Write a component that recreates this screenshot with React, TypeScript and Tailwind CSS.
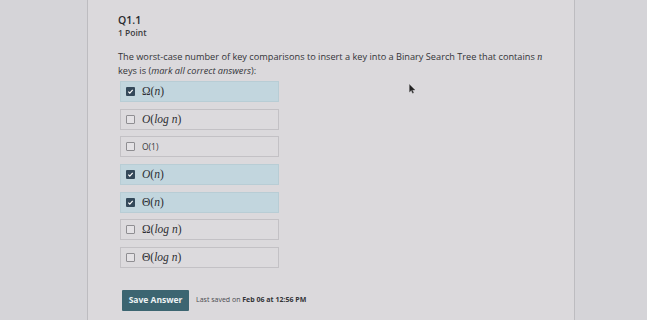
import React from "react";

const options = [
  { checked: true, label: <>Ω(<i>n</i>)</>, math: true },
  { checked: false, label: <><i>O</i>(<i>log n</i>)</>, math: true },
  { checked: false, label: <>O(1)</>, math: false },
  { checked: true, label: <><i>O</i>(<i>n</i>)</>, math: true },
  { checked: true, label: <>Θ(<i>n</i>)</>, math: true },
  { checked: false, label: <>Ω(<i>log n</i>)</>, math: true },
  { checked: false, label: <>Θ(<i>log n</i>)</>, math: true },
];

function Box({ checked }: { checked: boolean }) {
  if (checked) {
    return (
      <span className="flex h-[9px] w-[9px] items-center justify-center rounded-[1px] bg-[#34495a]">
        <svg width="7" height="7" viewBox="0 0 8 8">
          <path d="M1.5 4.2 L3.2 5.8 L6.5 2.2" stroke="#ffffff" strokeWidth="1.4" fill="none" />
        </svg>
      </span>
    );
  }
  return <span className="h-[9px] w-[9px] rounded-[1px] border border-[#8f8e92] bg-[#e4e2e5]" />;
}

export default function App() {
  return (
    <div
      className="relative flex h-[320px] w-[647px] overflow-hidden bg-[#d5d4d8] text-[#2f3033]"
      style={{ fontFamily: '"Open Sans", "Liberation Sans", sans-serif' }}
    >
      <div className="w-[87px] shrink-0" />
      <div className="w-[488px] shrink-0 border-l border-r border-[#bdbcc0] bg-[#dbd9dc] pl-[30px] pt-[13px]">
        <div className="text-[10.5px] font-semibold leading-[14px] text-[#2a2b2e]">Q1.1</div>
        <div className="text-[8.5px] font-semibold leading-[12px] text-[#3a3b3e]">1 Point</div>
        <p className="mt-[11px] w-[445px] text-[9.2px] leading-[14px] text-[#333438]">
          The worst-case number of key comparisons to insert a key into a Binary Search Tree that contains{" "}
          <i className="text-[10px]" style={{ fontFamily: '"Liberation Serif", serif' }}>n</i>
          <br />
          keys is (<i>mark all correct answers</i>):
        </p>
        <div className="mt-[3px] flex w-[161px] flex-col gap-[6.7px] pl-[2px]">
          {options.map((o, i) => (
            <div
              key={i}
              className={
                "flex h-[21px] items-center gap-[7px] border pl-[5px] " +
                (o.checked ? "border-[#b8cdd5] bg-[#c2d6de]" : "border-[#c3c1c5] bg-[#dcdadd]")
              }
            >
              <Box checked={o.checked} />
              <span
                className={o.math ? "text-[11.5px] text-[#2d2e32]" : "text-[8.5px] text-[#3a3b3e]"}
                style={{ fontFamily: o.math ? '"Liberation Serif", serif' : '"Open Sans", sans-serif' }}
              >
                {o.label}
              </span>
            </div>
          ))}
        </div>
        <div className="mt-[22px] flex items-center gap-[7px] pl-[4px]">
          <button className="h-[21px] w-[67px] rounded-[1px] bg-[#3c6571] text-[8.5px] font-bold text-[#eef3f4]">
            Save Answer
          </button>
          <span className="text-[7px] text-[#4a4b4f]">
            Last saved on <b className="text-[#333438]">Feb 06 at 12:56 PM</b>
          </span>
        </div>
      </div>
      <div className="flex-1" />
      <svg className="absolute left-[409px] top-[84px]" width="7" height="10" viewBox="0 0 7 10">
        <path d="M0.5 0.5 L0.5 8 L2.3 6.3 L3.6 9.2 L4.6 8.8 L3.4 6 L6 6 Z" fill="#222" stroke="#555" strokeWidth="0.4" />
      </svg>
    </div>
  );
}
